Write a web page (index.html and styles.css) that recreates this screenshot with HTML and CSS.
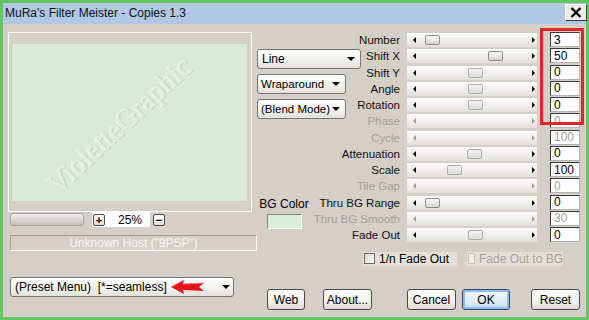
FILE: index.html
```html
<!DOCTYPE html>
<html lang="en">
<head>
  <meta charset="UTF-8" />
  <title>MuRa's Filter Meister - Copies 1.3</title>
  <link rel="stylesheet" href="styles.css">
</head>
<body>
  <div class="window">
    <div class="titlebar">
      <span class="title">MuRa's Filter Meister - Copies 1.3</span>
      <button class="close" aria-label="Close">
        <svg width="12" height="11" viewBox="0 0 12 11"><path d="M1.5 1 L10.5 10 M10.5 1 L1.5 10" stroke="#000" stroke-width="2.2"/></svg>
      </button>
    </div>

    <div class="main">
      <div class="left">
        <div class="preview">
          <div class="canvas"><span class="watermark">VioletteGraphic</span></div>
        </div>

        <div class="zoom-row">
          <div class="zoom-bar"></div>
          <div class="zoom-box">
            <span class="mini-btn">+</span>
            <span class="zoom-val">25%</span>
          </div>
          <span class="mini-btn minus">−</span>
        </div>

        <div class="host">Unknown Host ("9PSP")</div>

        <div class="select preset">
          <span>(Preset Menu)&nbsp; [*=seamless]</span>
          <svg class="red-arrow" width="34" height="16" viewBox="0 0 34 16">
            <polygon points="0,8 13,1 12,5 33,4 28,8 33,12 12,11 13,15" fill="#e8141c"/>
            <polyline points="0,8 13,1 12,5 33,4" fill="none" stroke="#ff7a7a" stroke-width="1"/>
          </svg>
          <span class="caret"></span>
        </div>
      </div>

      <div class="right">
        <div class="controls">
          <div class="side">
            <div class="select line"><span>Line</span><span class="caret"></span></div>
            <div class="select mode"><span>Wraparound</span><span class="caret"></span></div>
            <div class="select mode"><span>(Blend Mode)</span><span class="caret"></span></div>
            <div class="bg-color">
              <span>BG Color</span>
              <div class="swatch"></div>
            </div>
          </div>

          <div class="sliders">
            <label>Number</label>
            <div class="track"><span class="thumb" style="left: 18px"></span></div>
            <input type="text" value="3">

            <label>Shift X</label>
            <div class="track"><span class="thumb" style="left: 81px"></span></div>
            <input type="text" value="50">

            <label>Shift Y</label>
            <div class="track"><span class="thumb dim" style="left: 61px"></span></div>
            <input type="text" value="0">

            <label>Angle</label>
            <div class="track"><span class="thumb dim" style="left: 61px"></span></div>
            <input type="text" value="0">

            <label>Rotation</label>
            <div class="track"><span class="thumb dim" style="left: 61px"></span></div>
            <input type="text" value="0">

            <label class="off">Phase</label>
            <div class="track off"></div>
            <input type="text" value="0" disabled>

            <label class="off">Cycle</label>
            <div class="track off"></div>
            <input type="text" value="100" disabled>

            <label>Attenuation</label>
            <div class="track"><span class="thumb dim" style="left: 60px"></span></div>
            <input type="text" value="0">

            <label>Scale</label>
            <div class="track"><span class="thumb dim" style="left: 40px"></span></div>
            <input type="text" value="100">

            <label class="off">Tile Gap</label>
            <div class="track off"></div>
            <input type="text" value="0" disabled>

            <label>Thru BG Range</label>
            <div class="track"><span class="thumb" style="left: 18px"></span></div>
            <input type="text" value="0">

            <label class="off">Thru BG Smooth</label>
            <div class="track off"></div>
            <input type="text" value="30" disabled>

            <label>Fade Out</label>
            <div class="track"><span class="thumb dim" style="left: 61px"></span></div>
            <input type="text" value="0">
          </div>

          <div class="mark"></div>
        </div>

        <div class="checks">
          <div class="check"><span class="box"></span>1/n Fade Out</div>
          <div class="check off"><span class="box"></span>Fade Out to BG</div>
        </div>

        <div class="buttons">
          <button class="btn web">Web</button>
          <button class="btn about">About...</button>
          <button class="btn cancel">Cancel</button>
          <button class="btn ok">OK</button>
          <button class="btn reset">Reset</button>
        </div>
      </div>
    </div>
  </div>
</body>
</html>
```

FILE: styles.css
```css
* {
  box-sizing: border-box;
}

body {
  margin: 0;
  font-family: 'Liberation Sans', Arial, sans-serif;
  font-size: 11px;
  color: #000;
}

.window {
  width: 589px;
  height: 320px;
  border: 3px solid #63c663;
  background: #d4d0c8;
  display: flex;
  flex-direction: column;
  white-space: nowrap;
}

/* title bar */
.titlebar {
  height: 21px;
  flex-shrink: 0;
  background: #b0c8e3;
  display: flex;
  align-items: flex-start;
  justify-content: space-between;
  padding-left: 2px;
}

.title {
  font-size: 12px;
  line-height: 21px;
  color: #111;
}

.close {
  width: 22px;
  height: 17px;
  margin: 1px -1px 0 0;
  padding: 0;
  background: #eeece8;
  border: 1px solid;
  border-color: #fff #404040 #404040 #fff;
  display: flex;
  align-items: center;
  justify-content: center;
}

.main {
  flex: 1;
  display: flex;
}

/* left column */
.left {
  width: 254px;
  padding: 8px 0 0 5px;
}

.preview {
  width: 244px;
  height: 180px;
  border: 1px solid #fcfcfc;
  padding: 11px 4px 10px 3px;
}

.canvas {
  height: 100%;
  background: #d9eada;
  display: flex;
  align-items: center;
  justify-content: center;
  overflow: hidden;
}

.watermark {
  font-family: 'Liberation Serif', serif;
  font-size: 29px;
  color: #e1eedf;
  text-shadow: 1px 1px 0 #c3d3c1, -1px -1px 0 #eef6ed;
  transform: translate(-10px, 3px) rotate(-43deg);
}

.zoom-row {
  height: 15px;
  display: flex;
  align-items: center;
  padding-left: 2px;
}

.zoom-bar {
  width: 74px;
  height: 13px;
  border: 1px solid #a6a49e;
  border-radius: 3px;
  background: linear-gradient(#eeede9, #d6d4ce 60%, #c2c0ba);
}

.zoom-box {
  margin-left: 8px;
  width: 58px;
  height: 15px;
  background: #fdfdfd;
  display: flex;
  align-items: center;
  padding-left: 1px;
}

.zoom-val {
  margin-left: 13px;
  font-size: 12px;
}

.mini-btn {
  width: 12px;
  height: 12px;
  border: 1px solid #4a4a4a;
  border-radius: 2px;
  background: linear-gradient(#ffffff, #dddbd4);
  font-size: 11px;
  font-weight: bold;
  line-height: 10px;
  text-align: center;
}

.mini-btn.minus {
  margin-left: 3px;
}

.host {
  margin: 8px 0 0 2px;
  width: 247px;
  height: 16px;
  border: 1px solid;
  border-color: #a09d96 #fff #fff #a09d96;
  color: #f6f6f4;
  text-align: center;
  line-height: 14px;
  font-size: 12px;
}

/* drop-down menus */
.select {
  height: 20px;
  border: 1px solid #767676;
  border-radius: 3px;
  background: linear-gradient(#ffffff, #f1f0ec 60%, #e2e0da);
  display: flex;
  align-items: center;
  padding: 0 5px 0 4px;
  font-size: 12px;
}

.caret {
  margin-left: auto;
  border-left: 4px solid transparent;
  border-right: 4px solid transparent;
  border-top: 4px solid #000;
}

.preset {
  margin: 26px 0 0 2px;
  width: 224px;
  padding-right: 3px;
}

.red-arrow {
  margin-left: 4px;
}

.right {
  width: 326px;
  display: flex;
  flex-direction: column;
}

.controls {
  margin-top: 8px;
  display: grid;
}

.side,
.sliders,
.mark {
  grid-area: 1 / 1;
}

.side {
  display: flex;
  flex-direction: column;
  align-items: flex-start;
  gap: 5px;
  padding-top: 17px;
}

.line {
  width: 104px;
}

.mode {
  width: 89px;
  font-size: 11.5px;
  padding-left: 3px;
}

.bg-color {
  margin-top: 73px;
  width: 54px;
  display: flex;
  flex-direction: column;
  align-items: center;
  font-size: 12px;
}

.swatch {
  margin-top: 3px;
  width: 35px;
  height: 15px;
  background: #dbeed9;
  border: 1px solid;
  border-color: #8a8780 #fff #fff #8a8780;
}

/* slider rows */
.sliders {
  display: grid;
  grid-template-columns: 143px 137px 43px;
  grid-auto-rows: 16.25px;
}

.sliders label {
  text-align: right;
  line-height: 16.25px;
  font-size: 11.5px;
  color: #111;
}

.sliders label.off,
.off {
  color: #a3a09a;
}

.track {
  position: relative;
  margin: 1px 0 0 7px;
  height: 14px;
  background: linear-gradient(#fbfbfa, #efeeeb 55%, #e2e0db);
  display: flex;
  align-items: center;
  justify-content: space-between;
  padding: 0 2px 0 6px;
}

.track::before {
  content: "";
  border-top: 3px solid transparent;
  border-bottom: 3px solid transparent;
  border-right: 3px solid #000;
}

.track::after {
  content: "";
  border-top: 3px solid transparent;
  border-bottom: 3px solid transparent;
  border-left: 3px solid #000;
}

.track.off::before {
  border-right-color: #a3a09a;
}

.track.off::after {
  border-left-color: #a3a09a;
}

.thumb {
  position: absolute;
  top: 2px;
  width: 15px;
  height: 10px;
  border: 1px solid #8c8c8c;
  border-radius: 2px;
  background: linear-gradient(#fdfdfd, #d4d3cf);
}

.thumb.dim {
  border-color: #adadad;
  background: linear-gradient(#f4f4f2, #dcdbd7);
}

.sliders input {
  margin-left: 13px;
  width: 30px;
  height: 15px;
  padding: 0 0 0 3px;
  border: 1px solid;
  border-color: #3a3a3a #b4b2ac #b4b2ac #3a3a3a;
  background: #fff;
  font: inherit;
  font-size: 12px;
  line-height: 13px;
  color: #000;
}

.sliders input:disabled {
  color: #a3a09a;
}

/* red highlight around the first five values */
.mark {
  justify-self: end;
  align-self: start;
  margin: -4px -1px 0 0;
  width: 44px;
  height: 97px;
  border: 3px solid #e4232b;
}

.checks {
  margin-top: 7px;
  height: 17px;
  display: flex;
  align-items: center;
  gap: 10px;
  padding-left: 106px;
  font-size: 12px;
}

.check {
  height: 14px;
  background: #e3e0da;
  display: flex;
  align-items: center;
  gap: 4px;
  padding-left: 1px;
}

.check:first-child {
  width: 94px;
}

.check.off {
  width: 96px;
}

.box {
  width: 11px;
  height: 11px;
  border: 1px solid #6a6a6a;
  background: linear-gradient(135deg, #d8d7d0, #fafaf8);
}

.check.off .box {
  border-color: #c4c2bc;
  background: #eeede9;
}

/* bottom buttons */
.buttons {
  margin-top: 22px;
  display: flex;
  padding-left: 10px;
}

.btn {
  height: 21px;
  padding: 0;
  border: 1px solid #4a4a4a;
  border-radius: 3px;
  background: linear-gradient(#ffffff, #f2f1ec 55%, #dedcd4);
  font: inherit;
  font-size: 12px;
  color: #000;
}

.web { width: 38px; }
.about { width: 49px; margin-left: 18px; }
.cancel { width: 49px; margin-left: 35px; }
.ok {
  width: 48px;
  margin-left: 6px;
  border-color: #2c4b6c;
  box-shadow: inset 0 0 0 2px #8ebcec;
  background: linear-gradient(#f5f9fd, #dfebf7 60%, #cadcee);
}
.reset { width: 49px; margin-left: 21px; }
```
